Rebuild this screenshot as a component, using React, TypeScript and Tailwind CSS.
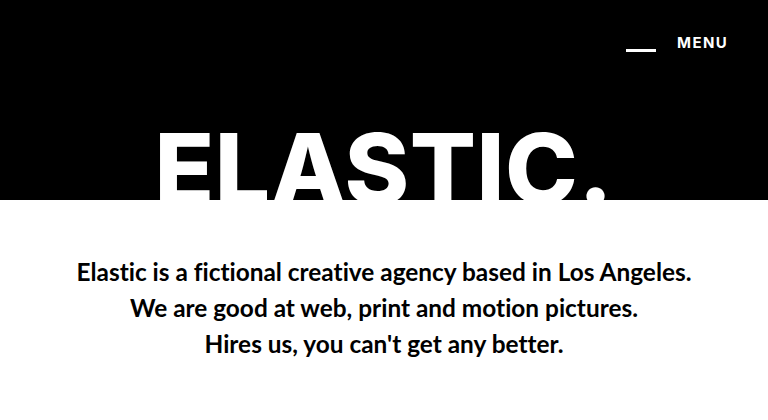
export default function App() {
  return (
    <div className="min-h-screen bg-white" style={{ fontFamily: "Lato, sans-serif" }}>
      <section className="flex h-[200px] flex-col overflow-hidden bg-black text-white">
        <header className="flex items-center justify-end gap-[21px] pr-10 pt-[34px]">
          <span className="mt-[14px] block h-[3px] w-[30px] bg-white" />
          <span className="font-['Inter',sans-serif] text-[15px] font-bold leading-[18px] tracking-[0.09em]">
            MENU
          </span>
        </header>
        <div className="flex flex-1 items-end justify-center">
          <h1 className="mb-[-18px] font-['Inter',sans-serif] text-[98px] font-extrabold leading-none tracking-[0.005em]">
            ELASTIC.
          </h1>
        </div>
      </section>
      <section className="pt-[54px] text-center text-[24.4px] font-bold leading-[36px] text-black [font-variant-ligatures:none]">
        <p>Elastic is a fictional creative agency based in Los Angeles.</p>
        <p>We are good at web, print and motion pictures.</p>
        <p>Hires us, you can't get any better.</p>
      </section>
    </div>
  );
}
